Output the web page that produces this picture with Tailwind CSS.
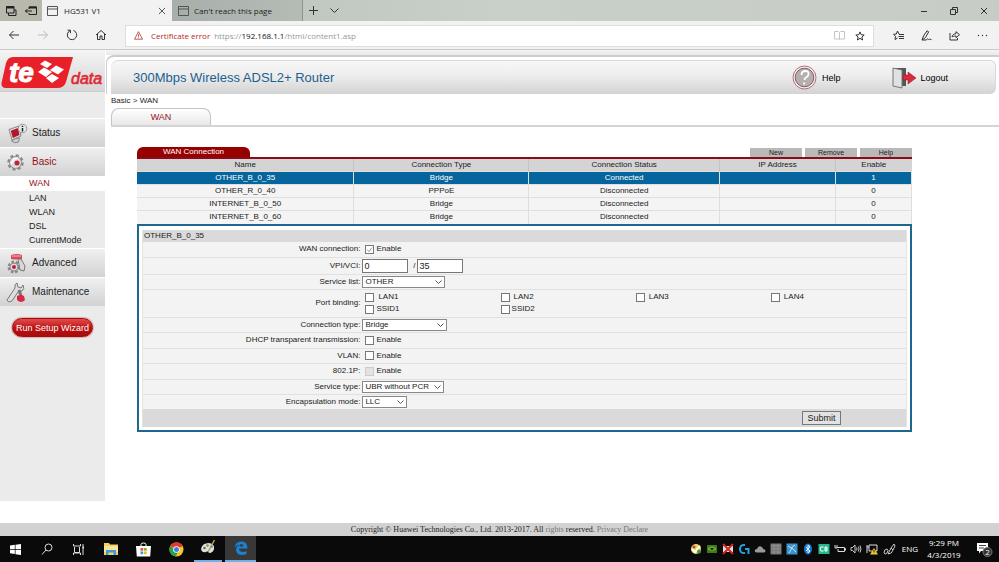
<!DOCTYPE html>
<html lang="en">
<head>
<meta charset="utf-8">
<title>HG531 V1</title>
<script src="https://cdn.jsdelivr.net/npm/@tailwindcss/browser@4"></script>
</head>
<body class="min-h-screen flex flex-col bg-white text-[#222] text-[8px] leading-[12px] font-['Liberation_Sans',Arial,sans-serif]">

<!-- browser tabs -->
<header class="text-[8px] font-['Open_Sans','Segoe_UI',sans-serif]">
    <div class="flex h-[21px] bg-linear-to-r from-[#b5bbb6] via-[#c8d0c9] to-[#c8ccc6]">
        <div class="flex items-center gap-2 w-[42px] pl-[5px] bg-[#b9b8ad]">
            <button aria-label="Tabs set aside"><svg class="size-[12px]" viewBox="0 0 12 12" fill="none" stroke="#222"><path d="M1.500 8V1.500H9V8z"/><path d="M1 2.500h8" stroke-width="2"/><path d="M3.500 8v2.500H11V5H9"/></svg></button>
            <button aria-label="Set tabs aside"><svg class="size-[12px]" viewBox="0 0 12 12" fill="none" stroke="#222"><path d="M4 4V2h7.500v7.500H4V8M0 6h7M2.500 4L.5 6l2 2"/><path d="M4 2.500h7.500" stroke-width="2"/></svg></button>
        </div>
        <div class="flex items-center w-[130px] pl-[5px] pr-[6px] bg-[#f2f2f2]">
            <svg class="w-[11px] h-[10px]" viewBox="0 0 11 10" fill="none" stroke="#555"><path d="M.5.500h10v9H.5zM.5 3h10"/></svg>
            <span class="ml-[6px] flex-1">HG531 V1</span>
            <button aria-label="Close tab"><svg class="size-[8px]" viewBox="0 0 9 9" stroke="#444"><path d="M1 1l7 7M8 1L1 8"/></svg></button>
        </div>
        <div class="flex items-center w-[131px] pl-[6px] border-r border-[#8d9590] bg-linear-to-r from-[#a7afab] to-[#b5bcb6]">
            <svg class="w-[11px] h-[10px]" viewBox="0 0 11 10" fill="none" stroke="#555"><path d="M.5.500h10v9H.5zM.5 3h10"/></svg>
            <span class="ml-[5px]">Can't reach this page</span>
        </div>
        <div class="flex items-center gap-3 pl-[6px] flex-1">
            <button aria-label="New tab"><svg class="size-[9px]" viewBox="0 0 9 9" stroke="#333"><path d="M4.500 0v9M0 4.500h9"/></svg></button>
            <button aria-label="Tab previews"><svg class="w-[9px] h-[6px]" viewBox="0 0 9 6" fill="none" stroke="#333"><path d="M.5.500l4 4 4-4"/></svg></button>
        </div>
        <div class="flex items-center gap-[22px] pr-[11px]">
            <button aria-label="Minimize"><svg class="size-[8px]" viewBox="0 0 8 8" stroke="#333"><path d="M1 4.500h6"/></svg></button>
            <button aria-label="Restore"><svg class="size-[8px]" viewBox="0 0 8 8" fill="none" stroke="#333"><path d="M.5 2.500h5v5h-5zM2.500 2.500v-2h5v5h-2"/></svg></button>
            <button aria-label="Close"><svg class="size-[8px]" viewBox="0 0 8 8" stroke="#333"><path d="M1 1l6 6M7 1L1 7"/></svg></button>
        </div>
    </div>

    <!-- address bar -->
    <div class="flex items-center h-[29px] bg-[#f2f2f2] border-b border-[#c9c9c9]">
        <div class="flex items-center gap-[17px] w-[125px] pl-[8px]">
            <button aria-label="Back"><svg class="size-[12px]" viewBox="0 0 12 12" fill="none" stroke="#333"><path d="M11 6H1.500M5.500 2l-4 4 4 4"/></svg></button>
            <button aria-label="Forward"><svg class="size-[12px]" viewBox="0 0 12 12" fill="none" stroke="#bbb"><path d="M1 6h9.500M6.500 2l4 4-4 4"/></svg></button>
            <button aria-label="Refresh"><svg class="size-[12px]" viewBox="0 0 12 12" fill="none" stroke="#333"><path d="M7.500 1.500a4.700 4.700 0 1 1-3.500.2M1.500 1.200h3v3"/></svg></button>
            <button aria-label="Home"><svg class="size-[12px]" viewBox="0 0 12 12" fill="none" stroke="#333"><path d="M1 6l5-4.500L11 6M2.500 5v5.500H5V7h2v3.500h2.500V5"/></svg></button>
        </div>
        <div class="flex items-center flex-1 h-[22px] mt-px px-[8px] bg-white border border-[#ddd]">
            <svg class="size-[9px]" viewBox="0 0 9 9" fill="none" stroke="#b03030" stroke-width=".8"><path d="M4.500.700l4 7.500h-8zM4.500 3.200v2.600M4.500 6.500v.8"/></svg>
            <span class="ml-[8px] text-[#b02a2a]">Certificate error</span>
            <span class="ml-[4px] text-[#999]">https://<span class="text-[#111]">192.168.1.1</span>/html/content1.asp</span>
            <button class="ml-auto" aria-label="Reading view"><svg class="w-[11px] h-[9px]" viewBox="0 0 11 9" fill="none" stroke="#c4c4c4"><path d="M.5.500h4l1 1 1-1h4v7.500h-4l-1 .5-1-.5h-4zM5.500 1.500v7"/></svg></button>
            <button class="ml-[10px]" aria-label="Add to favorites"><svg class="size-[10px]" viewBox="0 0 10 10" fill="none" stroke="#333"><path d="M5 .9l1.200 2.800 3 .3-2.300 2 .7 3L5 7.400 2.400 9l.7-3L.8 4l3-.3z"/></svg></button>
        </div>
        <div class="flex items-center gap-[17px] w-[125px] pl-[19px]">
            <button aria-label="Hub"><svg class="size-[11px]" viewBox="0 0 11 11" fill="none" stroke="#333"><path d="M6 4L4.500 1 3.300 4 .5 4.300 2.600 6.300 2 9.500 4.500 8M6 4.500h5M5.500 6.500H11M6 8.500h5"/></svg></button>
            <button aria-label="Add notes"><svg class="size-[11px]" viewBox="0 0 11 11" fill="none" stroke="#333"><path d="M1 10L2.500 6 6 .8l1.700 1L4.500 7.500 1 10h4.500c1-3 2 1 3-1l2 .7"/></svg></button>
            <button aria-label="Share"><svg class="size-[11px]" viewBox="0 0 11 11" fill="none" stroke="#333"><path d="M1 3v7h7.500V8M3 7c.3-2 1.700-3.300 4-3.300V1.700l3.500 3-3.500 3V6C5 6 4 6.200 3 7z"/></svg></button>
            <button aria-label="More"><svg class="size-[11px]" viewBox="0 0 11 11" fill="#333"><circle cx="1.500" cy="5.500" r=".7"/><circle cx="5.500" cy="5.500" r=".7"/><circle cx="9.500" cy="5.500" r=".7"/></svg></button>
        </div>
    </div>
</header>

<div class="flex-1 flex pb-[22px]">
    <!-- sidebar -->
    <aside class="w-[105px] shrink-0 bg-[#ebebeb]">
        <div class="h-[42px] pt-[7px] bg-linear-to-b from-[#f4f4f4] to-[#d6d6d6] border-b border-[#cbcbcb]">
            <svg class="w-full h-[32px]" viewBox="0 0 105 32" role="img" aria-label="te data">
                <path d="M13 0H73L66 25Q64 31 57 31H6Q1 31 1.500 26L6 6Q8 0 13 0z" fill="#e8202a"/>
                <text x="9" y="25" font-size="28" font-weight="bold" font-style="italic" fill="#fff" stroke="#fff" stroke-width="1">te</text>
                <path d="M40 7l5-3.500 7 3.500-5 4zM50 13l6-4.500 8 4-6 5zM38 15l6-4.500 8 4.500-6 5zM46 21l6-4 7 4-7 5z" fill="#fff"/>
                <text x="71" y="27" font-size="16" font-style="italic" fill="#e02834" stroke="#e02834" stroke-width=".6">data</text>
            </svg>
        </div>
        <nav class="mt-[26px] text-[10px]">
            <a href="#" class="flex items-center h-[29px] pl-[7px] gap-[4px] bg-linear-to-b from-[#f0f0f0] to-[#d2d2d2] border-t border-white">
                <svg class="size-[21px]" viewBox="0 0 21 21"><path d="M2 6.500L12 3l2 10-9 4z" fill="#ddd" stroke="#888"/><path d="M3.800 7.800L11 5l1.500 7-6.700 3z" fill="#b3152b"/><path d="M4.500 18q3-3 8-3l-1 4q-4 2-7-1z" fill="#ccc" stroke="#888"/><circle cx="15.500" cy="5.500" r="4.300" fill="#e6e6e6" stroke="#999"/><path d="M15.500 5v3.500M15.500 2.800v1.200" stroke="#222" stroke-width="1.500"/></svg>
                Status
            </a>
            <a href="#" class="flex items-center h-[29px] pl-[5px] gap-[6px] text-[#98101c] bg-linear-to-b from-[#f0f0f0] to-[#d2d2d2] border-t border-white">
                <svg class="size-[21px]" viewBox="0 0 21 21"><circle cx="10.500" cy="10.500" r="7" fill="none" stroke="#888" stroke-width="2.500" stroke-dasharray="3 2.500"/><circle cx="10.500" cy="10.500" r="6" fill="#dcdcdc" stroke="#8a8a8a"/><circle cx="12" cy="11" r="2.500" fill="#c41f3a"/><path d="M6 12l3-5 4-1" fill="none" stroke="#fff" stroke-width="1.500"/></svg>
                Basic
            </a>
            <ul class="text-[9px] leading-[14px] pb-px">
                <li><a href="#" class="block pl-[29px] leading-[15px] bg-white text-[#98101c]">WAN</a></li>
                <li><a href="#" class="block pl-[29px]">LAN</a></li>
                <li><a href="#" class="block pl-[29px]">WLAN</a></li>
                <li><a href="#" class="block pl-[29px]">DSL</a></li>
                <li><a href="#" class="block pl-[29px]">CurrentMode</a></li>
            </ul>
            <a href="#" class="flex items-center h-[29px] pl-[6px] gap-[5px] bg-linear-to-b from-[#f0f0f0] to-[#d2d2d2] border-t border-white">
                <svg class="size-[21px]" viewBox="0 0 21 21"><circle cx="8" cy="14" r="5" fill="none" stroke="#888" stroke-width="3" stroke-dasharray="2.500 1.600"/><circle cx="8" cy="14" r="4" fill="#ddd" stroke="#888"/><circle cx="8" cy="14" r="2" fill="#c41f3a"/><path d="M5 2q6-2 11 0v4q-6 1-11 0z" fill="#d84a5c"/><path d="M6 3h9" stroke="#f7b5bd"/><path d="M12 6h3l4 7-1 5-4-1z" fill="#d8d8d8" stroke="#777"/></svg>
                Advanced
            </a>
            <a href="#" class="flex items-center h-[29px] pl-[6px] gap-[5px] bg-linear-to-b from-[#f0f0f0] to-[#d2d2d2] border-t border-white">
                <svg class="size-[21px]" viewBox="0 0 21 21"><path d="M1 18L9 6q-1-4 2-5l1 4 3 1 2-3q2 4-1 6l-4 1-6 9q-4 2-5-1z" fill="#ddd" stroke="#777"/><path d="M13 8l2 6" stroke="#777" stroke-width="3"/><path d="M11 14q4-2 7 0l1 4q-4 4-8 0z" fill="#d32b45"/></svg>
                Maintenance
            </a>
        </nav>
        <button class="block mt-[12px] ml-[12px] w-[81px] h-[19px] rounded-full border border-[#a01010] bg-linear-to-b from-[#e24a4a] via-[#bd1111] to-[#a80c0c] text-white text-[9px] whitespace-nowrap shadow-[0_0_1px_1px_#ddb0b0]">Run Setup Wizard</button>
    </aside>

    <div class="flex-1 flex flex-col pl-px">
        <!-- banner -->
        <div class="h-[5px] bg-linear-to-b from-[#f4f4f4] to-[#e8e8e8]"></div>
        <div class="pt-[3px] pl-[4px] pr-[3px] border-t-2 border-l border-[#cdcdcd] rounded-tl-lg">
            <div class="flex items-center h-[34px] pl-[22px] pr-[47px] rounded-r-md rounded-tl-lg border-t border-r border-[#d8d8d8] bg-linear-to-b from-[#f8f8f8] via-[#ebebeb] to-[#d3d3d3]">
                <h1 class="flex-1 text-[13px] text-[#1d5f8f]">300Mbps Wireless ADSL2+ Router</h1>
                <a href="#" class="flex items-center gap-[5px] text-[9px] text-black">
                    <svg class="size-[25px]" viewBox="0 0 25 25"><circle cx="12.500" cy="12.500" r="11.500" fill="#f6f0f0" stroke="#b66a72"/><circle cx="12.500" cy="12.500" r="9.300" fill="#b5b0b0" stroke="#7b5c5f"/><path d="M9.500 10q0-4 4-4 3.500 0 3 3.500-.5 2-2.500 3-1.500.7-1.500 2.500M12.200 17.500v2" fill="none" stroke="#fff" stroke-width="1.800"/></svg>
                    Help
                </a>
                <a href="#" class="flex items-center gap-[4px] ml-[52px] text-[9px] text-black">
                    <svg class="w-[24px] h-[24px]" viewBox="0 0 24 24"><path d="M1 2h13v18H1z" fill="#555"/><path d="M1 2l9 2v18l-9-2z" fill="#dfe2e2" stroke="#777"/><path d="M11 9h5V6l8 6-8 6v-4h-5z" fill="#d8293f" stroke="#8c1626" stroke-width=".5"/></svg>
                    Logout
                </a>
            </div>
        </div>

        <div class="pl-[5px] pt-px">
            <p class="leading-[11px]">Basic &gt; WAN</p>
            <div class="mt-[2px] border-b-2 border-[#d4d4d4]">
                <a href="#" class="block w-[100px] h-[17px] leading-[17px] text-center text-[9px] text-[#98101c] rounded-t-lg border border-b-0 border-[#c4c4c4] bg-linear-to-b from-white to-[#e8e8e8]">WAN</a>
            </div>
        </div>

        <main class="mt-[20px] ml-[31px] mr-[87px]">
            <div class="flex items-end border-b-2 border-[#8e0a18]">
                <h2 class="w-[113px] h-[10px] leading-[10px] text-center text-white bg-[#980000] rounded-t-md">WAN Connection</h2>
                <div class="ml-auto flex gap-[3px] text-[7px] leading-[9px]">
                    <button class="w-[52px] h-[9px] bg-[#b9b9b9]">New</button>
                    <button class="w-[52px] h-[9px] bg-[#b9b9b9]">Remove</button>
                    <button class="w-[52px] h-[9px] bg-[#b9b9b9]">Help</button>
                </div>
            </div>

            <table class="w-full table-fixed text-center leading-[12px]">
                <colgroup>
                    <col class="w-[28%]">
                    <col class="w-[22.6%]">
                    <col class="w-[24.6%]">
                    <col class="w-[15%]">
                    <col class="w-[9.8%]">
                </colgroup>
                <thead class="bg-[#d4d4d4]">
                    <tr>
                        <th class="font-normal border-r border-[#c4c4c4]">Name</th>
                        <th class="font-normal border-r border-[#c4c4c4]">Connection Type</th>
                        <th class="font-normal border-r border-[#c4c4c4]">Connection Status</th>
                        <th class="font-normal border-r border-[#c4c4c4]">IP Address</th>
                        <th class="font-normal">Enable</th>
                    </tr>
                </thead>
                <tbody id="wan_list"></tbody>
            </table>

            <!-- connection form -->
            <form class="p-[3px] pt-[4px] border-2 border-[#1f6690] bg-white">
                <div class="border-l border-r border-[#e4e4e4] bg-[#f3f3f3]">
                    <h3 class="h-[12px] pl-px bg-[#dadada]">OTHER_B_0_35</h3>
                    <div class="grid grid-cols-[2fr_5fr] gap-x-[2px] items-center h-[16px] border-b border-[#e0e0e0]">
                        <span class="text-right">WAN connection:</span>
                        <label class="flex items-center gap-[2px] pl-[3px]"><input type="checkbox" checked class="appearance-none size-[9px] border border-[#777] bg-white bg-[url('data:image/svg+xml,%3Csvg%20xmlns=%22http://www.w3.org/2000/svg%22%20viewBox=%220%200%207%207%22%3E%3Cpath%20d=%22M1%203.500l2%202%203-4%22%20fill=%22none%22%20stroke=%22%23777%22%20stroke-width=%22.8%22/%3E%3C/svg%3E')]">Enable</label>
                    </div>
                    <div class="grid grid-cols-[2fr_5fr] gap-x-[2px] items-center h-[17px] border-b border-[#e0e0e0]">
                        <label for="vpi" class="text-right">VPI/VCI:</label>
                        <div class="flex items-center">
                            <input id="vpi" type="text" value="0" class="w-[46px] h-[14px] pl-px border border-[#777] bg-white text-[9px]">
                            <span class="w-[9px] text-right pr-[2px]">/</span>
                            <input type="text" value="35" aria-label="VCI" class="w-[46px] h-[14px] pl-px border border-[#777] bg-white text-[9px]">
                        </div>
                    </div>
                    <div class="grid grid-cols-[2fr_5fr] gap-x-[2px] items-center h-[15px] border-b border-[#e0e0e0]">
                        <label for="service_list" class="text-right">Service list:</label>
                        <div class="relative w-[83px]">
                            <select id="service_list" class="block appearance-none w-full h-[12px] leading-[10px] pl-[2px] border border-[#888] bg-white"><option>OTHER</option></select>
                            <svg class="absolute right-[3px] top-[4px] w-[7px] h-[4px] pointer-events-none" viewBox="0 0 7 4" fill="none" stroke="#555"><path d="M.5.500l3 3 3-3"/></svg>
                        </div>
                    </div>
                    <div class="grid grid-cols-[2fr_5fr] gap-x-[2px] items-center h-[28px] border-b border-[#e0e0e0]">
                        <span class="text-right">Port binding:</span>
                        <div class="grid grid-cols-4 pl-[3px]">
                            <label class="flex items-center gap-[4px]"><input type="checkbox" class="appearance-none size-[9px] border border-[#777] bg-white">LAN1</label>
                            <label class="flex items-center gap-[4px]"><input type="checkbox" class="appearance-none size-[9px] border border-[#777] bg-white">LAN2</label>
                            <label class="flex items-center gap-[4px]"><input type="checkbox" class="appearance-none size-[9px] border border-[#777] bg-white">LAN3</label>
                            <label class="flex items-center gap-[4px]"><input type="checkbox" class="appearance-none size-[9px] border border-[#777] bg-white">LAN4</label>
                            <label class="flex items-center gap-[2px]"><input type="checkbox" class="appearance-none size-[9px] border border-[#777] bg-white">SSID1</label>
                            <label class="flex items-center gap-[2px]"><input type="checkbox" class="appearance-none size-[9px] border border-[#777] bg-white">SSID2</label>
                        </div>
                    </div>
                    <div class="grid grid-cols-[2fr_5fr] gap-x-[2px] items-center h-[15px] border-b border-[#e0e0e0]">
                        <label for="connection_type" class="text-right">Connection type:</label>
                        <div class="relative w-[85px]">
                            <select id="connection_type" class="block appearance-none w-full h-[12px] leading-[10px] pl-[2px] border border-[#888] bg-white"><option>Bridge</option></select>
                            <svg class="absolute right-[3px] top-[4px] w-[7px] h-[4px] pointer-events-none" viewBox="0 0 7 4" fill="none" stroke="#555"><path d="M.5.500l3 3 3-3"/></svg>
                        </div>
                    </div>
                    <div class="grid grid-cols-[2fr_5fr] gap-x-[2px] items-center h-[16px] border-b border-[#e0e0e0]">
                        <span class="text-right">DHCP transparent transmission:</span>
                        <label class="flex items-center gap-[2px] pl-[3px]"><input type="checkbox" class="appearance-none size-[9px] border border-[#777] bg-white">Enable</label>
                    </div>
                    <div class="grid grid-cols-[2fr_5fr] gap-x-[2px] items-center h-[15px] border-b border-[#e0e0e0]">
                        <span class="text-right">VLAN:</span>
                        <label class="flex items-center gap-[2px] pl-[3px]"><input type="checkbox" class="appearance-none size-[9px] border border-[#777] bg-white">Enable</label>
                    </div>
                    <div class="grid grid-cols-[2fr_5fr] gap-x-[2px] items-center h-[16px] border-b border-[#e0e0e0]">
                        <span class="text-right">802.1P:</span>
                        <label class="flex items-center gap-[2px] pl-[3px]"><input type="checkbox" disabled class="appearance-none size-[9px] border border-[#ccc] bg-[#e2e2e2]">Enable</label>
                    </div>
                    <div class="grid grid-cols-[2fr_5fr] gap-x-[2px] items-center h-[15px] border-b border-[#e0e0e0]">
                        <label for="service_type" class="text-right">Service type:</label>
                        <div class="relative w-[82px]">
                            <select id="service_type" class="block appearance-none w-full h-[12px] leading-[10px] pl-[2px] border border-[#888] bg-white"><option>UBR without PCR</option></select>
                            <svg class="absolute right-[3px] top-[4px] w-[7px] h-[4px] pointer-events-none" viewBox="0 0 7 4" fill="none" stroke="#555"><path d="M.5.500l3 3 3-3"/></svg>
                        </div>
                    </div>
                    <div class="grid grid-cols-[2fr_5fr] gap-x-[2px] items-center h-[14px]">
                        <label for="encap" class="text-right">Encapsulation mode:</label>
                        <div class="relative w-[45px]">
                            <select id="encap" class="block appearance-none w-full h-[12px] leading-[10px] pl-[2px] border border-[#888] bg-white"><option>LLC</option></select>
                            <svg class="absolute right-[3px] top-[4px] w-[7px] h-[4px] pointer-events-none" viewBox="0 0 7 4" fill="none" stroke="#555"><path d="M.5.500l3 3 3-3"/></svg>
                        </div>
                    </div>
                    <div class="flex items-center justify-end h-[18px] pr-[65px] bg-[#dadada]">
                        <button type="button" class="w-[39px] h-[14px] border border-[#777] bg-[#e2e2e2] text-[9px]">Submit</button>
                    </div>
                </div>
            </form>
        </main>
    </div>
</div>

<footer class="h-[13px] leading-[13px] text-center bg-[#d2d2d2] font-['Liberation_Serif','Times_New_Roman',serif]">
    Copyright © Huawei Technologies Co., Ltd. 2013-2017. All <span class="text-[#777]">rights</span> reserved. <a href="#" class="text-[#777]">Privacy Declare</a>
</footer>

<!-- windows taskbar -->
<div class="flex h-[26px] bg-[#0a0a0a] text-white text-[8px] font-['Open_Sans','Segoe_UI',sans-serif]">
    <div class="flex">
        <button class="w-[31px] grid place-items-center" aria-label="Start"><svg class="size-[11px]" viewBox="0 0 11 11" fill="#fff"><path d="M0 1.500L4.800.800V5H0zM5.500.700L11 0v5H5.500zM0 5.700h4.800V10L0 9.300zM5.500 5.700H11V11l-5.500-.8z"/></svg></button>
        <button class="w-[32px] grid place-items-center" aria-label="Search"><svg class="size-[12px]" viewBox="0 0 12 12" fill="none" stroke="#ddd"><circle cx="7.500" cy="4.500" r="3.500"/><path d="M5 7l-4 4.500"/></svg></button>
        <button class="w-[31px] grid place-items-center" aria-label="Task view"><svg class="w-[12px] h-[11px]" viewBox="0 0 12 11" fill="none" stroke="#ddd"><path d="M.5 0v2h7V0M1.500 3v5.500h5V3M.5 11V9h7v2M10 0v11"/><path d="M9.500 3.500h1.500" stroke-width="2"/></svg></button>
        <button class="w-[34px] grid place-items-center" aria-label="File Explorer"><svg class="size-[14px]" viewBox="0 0 14 14"><path d="M0 1h5l1 1.500h8V13H0z" fill="#f5cf60"/><path d="M0 4h14v6H0z" fill="#fbe39a"/><path d="M2 8h10v5H9.500v-2.500h-5V13H2z" fill="#3f9bd8"/></svg></button>
        <button class="w-[31px] grid place-items-center" aria-label="Store"><svg class="size-[15px]" viewBox="0 0 15 15"><path d="M5 4V2.500Q5 1 7.500 1T10 2.500V4" fill="none" stroke="#fff"/><path d="M0 4h15l-.8 10.500H.8z" fill="#fff"/><path d="M4.500 6h2.700v2.700H4.500z" fill="#e8502a"/><path d="M8 6h2.700v2.700H8z" fill="#7ab51d"/><path d="M4.500 9.500h2.700v2.700H4.500z" fill="#2a9fdc"/><path d="M8 9.500h2.700v2.700H8z" fill="#f8b61c"/></svg></button>
        <button class="w-[35px] grid place-items-center" aria-label="Chrome"><svg class="size-[15px]" viewBox="0 0 15 15"><circle cx="7.500" cy="7.500" r="7" fill="#f6c62c"/><path d="M7.500 7.500L1.300 4A7 7 0 0 1 13.700 4z" fill="#e23b2e"/><path d="M1.300 4A7 7 0 0 0 6.800 14.500L9.500 9z" fill="#2e9e4d"/><circle cx="7.500" cy="7.500" r="3.300" fill="#fff"/><circle cx="7.500" cy="7.500" r="2.500" fill="#3f7de0"/></svg></button>
        <button class="w-[28px] grid place-items-center border-b-2 border-[#6cb4e8]" aria-label="Paint"><svg class="size-[16px]" viewBox="0 0 16 16"><path d="M1 9q1-6 8-6 6 1 5 6-1 4-5 4-1-3-3-1-4 1-5-3z" fill="#d7e3e6"/><circle cx="4.500" cy="8" r="1.300" fill="#d1452c"/><circle cx="7.500" cy="5.500" r="1.300" fill="#55a83c"/><circle cx="11.500" cy="6.500" r="1.300" fill="#3585c8"/><path d="M14.500 0L8 12" stroke="#c79647" stroke-width="1.500"/></svg></button>
        <button class="w-[31px] ml-[3px] grid place-items-center bg-[#383838] border-b-2 border-[#6cb4e8]" aria-label="Edge"><svg class="size-[14px]" viewBox="0 0 14 14"><path d="M.5 6.500Q1.500.500 7.500.500q6 0 6 7H5q.3 3.500 4 3.500 2 0 3.500-1v3q-2 1-4.500 1-5.500 0-6-5Q2 5 6 3.500 3 3.500.5 6.500zM5.200 5.500H9.500Q9.300 3 7.500 3T5.200 5.500z" fill="#1b81d4"/></svg></button>
    </div>
    <div class="flex items-center gap-[4px] ml-auto">
        <svg class="size-[12px]" viewBox="0 0 12 12"><circle cx="6" cy="6" r="5" fill="#e9d460"/><path d="M2 6l3 3 5-6" fill="none" stroke="#fff" stroke-width="2"/><circle cx="9" cy="8.500" r="2" fill="#3a9b45"/><circle cx="4" cy="4" r="1.500" fill="#c9402d"/></svg>
        <svg class="size-[12px]" viewBox="0 0 12 12"><path d="M1 2h10v8H1z" fill="#3d7a17"/><path d="M2 6q4-4 8 0-4 3-8 0z" fill="none" stroke="#7fb53a"/><circle cx="6" cy="6" r="1" fill="#111"/></svg>
        <svg class="size-[12px]" viewBox="0 0 12 12"><path d="M1 3h10v6H1z" fill="#ddd"/><path d="M1 1l10 10M11 1L1 11" stroke="#d3261c" stroke-width="2"/></svg>
        <svg class="size-[12px]" viewBox="0 0 12 12" fill="none" stroke="#1ea5e0" stroke-width="2"><path d="M7 2Q2 1.500 2 6t5 4M7 6h3.500v5"/></svg>
        <svg class="size-[12px]" viewBox="0 0 12 12"><path d="M2.500 9.500Q0 9 1 7q1-1.500 2-1 1-3.500 4-2.500 2 .5 2 2.500 2.500 0 2.500 2 0 1.500-2 1.500z" fill="#999"/></svg>
        <svg class="size-[12px]" viewBox="0 0 12 12"><path d="M.5.500h11v11H.5z" fill="#777"/><path d="M1 3h10M1 6h10M1 9h10M4 1v10M8 1v10" stroke="#999" stroke-width=".7"/></svg>
        <svg class="size-[12px]" viewBox="0 0 12 12"><path d="M.5.500h11v11H.5z" fill="#3c93cf"/><path d="M2 3l3 2 4-3M3 10l3-5 4 4" fill="none" stroke="#c7e4f5"/></svg>
        <svg class="size-[12px]" viewBox="0 0 12 12"><ellipse cx="6" cy="6" rx="4" ry="5.500" fill="#1478d4"/><path d="M4 4l4 4-2 2V2l2 2-4 4" fill="none" stroke="#fff" stroke-width=".9"/></svg>
        <svg class="size-[12px]" viewBox="0 0 12 12"><path d="M.5 1h11v10H.5z" fill="#27b78d"/><path d="M5.500 4Q2 3 2 6t3.500 2M7 4h2v4H7zM7 6h2" fill="none" stroke="#fff"/></svg>
        <svg class="size-[12px]" viewBox="0 0 12 12" fill="none" stroke="#ddd"><path d="M3 4.500h7.500v4H4V6M10.500 5.500h1v2M1 2v3h2V2"/></svg>
        <svg class="size-[12px]" viewBox="0 0 12 12" fill="none" stroke="#ddd" stroke-width=".9"><path d="M1 4.500h1.500L5 2v8L2.500 7.500H1zM6.500 4.500q1 1.500 0 3M8.300 3.500q1.500 2.500 0 5M10 2.500q2 3.500 0 7"/></svg>
        <svg class="size-[12px]" viewBox="0 0 12 12"><path d="M1 10V7M3 2h8v6H3zM1 2v2h2M1 4v3" fill="none" stroke="#ddd"/><path d="M8 5l4 6.500H4z" fill="#f3c52c"/><path d="M8 7v2.500" stroke="#222"/></svg>
        <svg class="w-[13px] h-[13px] ml-px" viewBox="0 0 13 13" fill="none" stroke="#ddd" stroke-width=".9"><path d="M1 10q0-4 3-4 2 1 0 4-2 2-3 0M5 11q4 0 5-4L8 5l3-4 1 2-2 4M5 11l3-6"/></svg>
        <span class="ml-[2px]">ENG</span>
        <time class="w-[44px] text-center leading-[12px]">9:29 PM<br>4/3/2019</time>
        <button class="w-[29px] grid place-items-center" aria-label="Notifications, 2 new"><svg class="size-[17px]" viewBox="0 0 17 17"><path d="M1 2h11v8H5l-2 2.500V10H1z" fill="#fff"/><path d="M3 4.500h7M3 7h5" stroke="#444"/><circle cx="11.500" cy="11" r="4.500" fill="#333" stroke="#777"/><text x="11.500" y="14" font-size="8" fill="#fff" text-anchor="middle">2</text></svg></button>
    </div>
</div>

<script>
const wanList = {
    rows: [
        ['OTHER_B_0_35', 'Bridge', 'Connected', '', '1'],
        ['OTHER_R_0_40', 'PPPoE', 'Disconnected', '', '0'],
        ['INTERNET_B_0_50', 'Bridge', 'Disconnected', '', '0'],
        ['INTERNET_B_0_60', 'Bridge', 'Disconnected', '', '0']
    ],
    render() {
        const body = document.getElementById('wan_list')
        this.rows.forEach((row, i) => {
            const tr = document.createElement('tr')
            // first connection is the selected one
            tr.className = i === 0 ? 'bg-[#06659c] text-white' : 'bg-[#f4f4f4]'
            row.forEach(value => {
                const td = document.createElement('td')
                td.className = 'h-[13px] border-t border-r border-[#e0dede]'
                td.innerText = value
                tr.appendChild(td)
            })
            body.appendChild(tr)
        })
    }
}
wanList.render()
</script>
</body>
</html>
